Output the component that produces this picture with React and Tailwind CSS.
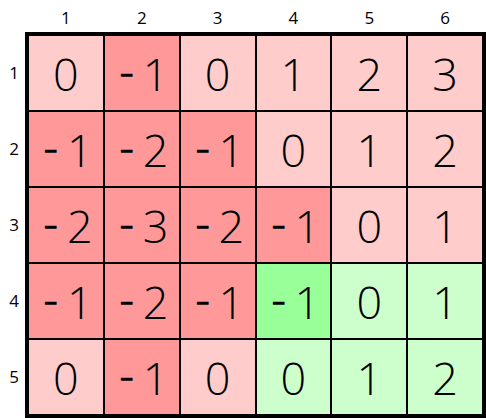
const rows = [
  [0, -1, 0, 1, 2, 3],
  [-1, -2, -1, 0, 1, 2],
  [-2, -3, -2, -1, 0, 1],
  [-1, -2, -1, -1, 0, 1],
  [0, -1, 0, 0, 1, 2],
]

// green area: rows 4-5, cols 4-6 (zero-based r>=3, c>=3)
function cellColor(r, c, v) {
  if (r >= 3 && c >= 3) return v < 0 ? 'bg-[#99ff99]' : 'bg-[#ccffcc]'
  return v < 0 ? 'bg-[#ff9999]' : 'bg-[#ffcccc]'
}

function Num({ v }) {
  if (v < 0)
    return (
      <span className="flex items-center">
        <span className="-ml-[1px] mr-[3px] inline-block scale-x-[0.55] font-normal">{'\u2212'}</span>
        {Math.abs(v)}
      </span>
    )
  return <span>{v}</span>
}

export default function App() {
  return (
    <div className="h-[418px] w-[486px] bg-white font-['Open_Sans',sans-serif] text-black">
      {/* Column labels */}
      <div className="ml-[29px] grid h-[32px] w-[453px] grid-cols-6 gap-[2px]">
        {[1, 2, 3, 4, 5, 6].map((n) => (
          <div key={n} className="flex items-center justify-center pt-[3px] text-[17px]">
            {n}
          </div>
        ))}
      </div>

      <div className="flex">
        {/* Row labels */}
        <div className="grid w-[25px] grid-rows-5 gap-[2px] py-[4px]">
          {[1, 2, 3, 4, 5].map((n) => (
            <div key={n} className="flex items-center justify-center pl-[3px] text-[17px]">
              {n}
            </div>
          ))}
        </div>

        {/* Table */}
        <div className="grid h-[386px] w-[461px] grid-cols-6 grid-rows-5 gap-[2px] border-4 border-black bg-black">
          {rows.map((row, r) =>
            row.map((v, c) => (
              <div
                key={r + '-' + c}
                className={'flex items-center justify-center text-[45px] font-light leading-none ' + cellColor(r, c, v)}
              >
                <Num v={v} />
              </div>
            ))
          )}
        </div>
      </div>
    </div>
  )
}
